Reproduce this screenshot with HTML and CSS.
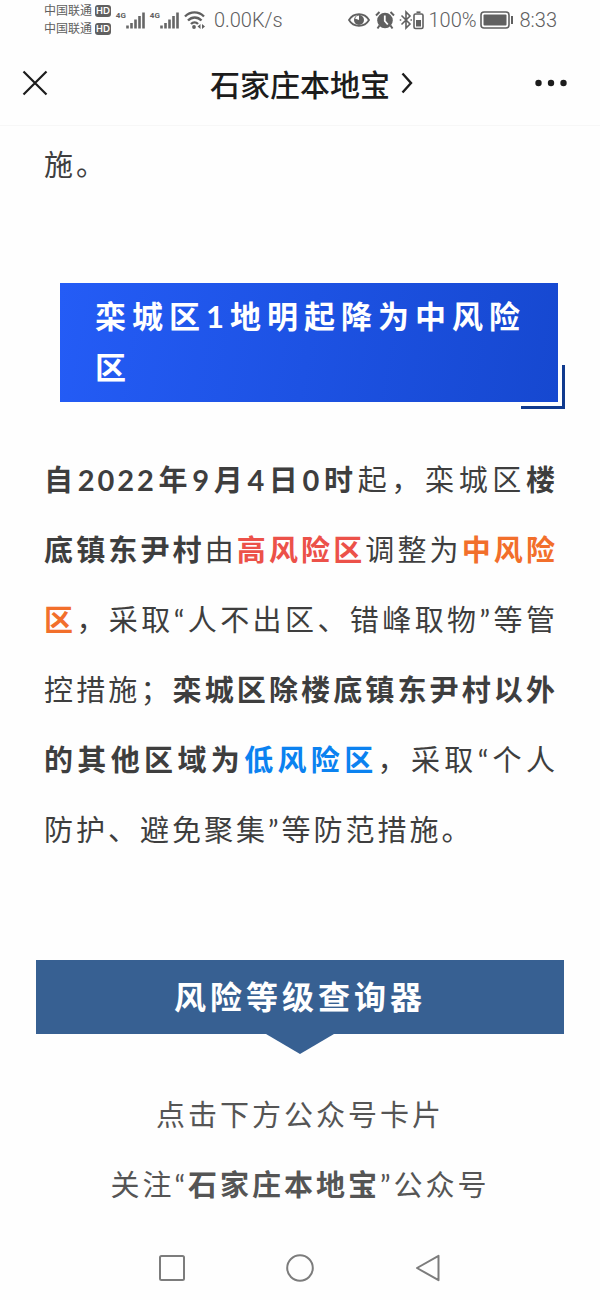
FILE: index.html
```
<!DOCTYPE html>
<html lang="zh-CN">
<head>
  <meta charset="UTF-8">
  <meta name="viewport" content="width=device-width, initial-scale=1.0">
  <title>石家庄本地宝</title>
  <link rel="stylesheet" href="styles.css">
</head>
<body>
  <!-- 状态栏 -->
  <div class="status-bar">
    <div class="status-left">
      <div class="carriers">
        <div class="carrier">中国联通<span class="hd">HD</span></div>
        <div class="carrier">中国联通<span class="hd">HD</span></div>
      </div>
      <div class="signal">
        <span class="net">4G</span>
        <svg width="19" height="18" viewBox="0 0 19 18"><path d="M1.5 14.500v3M5.500 12v5.500M9.500 8.500v9M13.500 5v12.500M17.500 1.500v16" stroke="#666" stroke-width="2.600"/></svg>
      </div>
      <div class="signal">
        <span class="net">4G</span>
        <svg width="19" height="18" viewBox="0 0 19 18"><path d="M1.5 14.500v3M5.500 12v5.500M9.500 8.500v9M13.500 5v12.500M17.500 1.500v16" stroke="#666" stroke-width="2.600"/></svg>
      </div>
      <svg class="wifi" width="22" height="20" viewBox="0 0 22 20" fill="none" stroke="#606060" stroke-width="2.400">
        <path d="M1 6.500C6.500 1 14.500 1 20 6.500M4 10.500c4-4 9.500-4 13.500 0M7 14c2.200-2.200 5-2.200 7 0"/>
        <circle cx="10" cy="17" r="1.900" fill="#606060" stroke="none"/>
        <path d="M16.500 14v5l-3-2.500zM18 14v5l3-2.500z" fill="#606060" stroke="none"/>
      </svg>
      <span class="status-text speed">0.00K/s</span>
    </div>
    <div class="status-right">
      <svg width="22" height="16" viewBox="0 0 22 16">
        <path d="M1 8C5.500.3 16.500.3 21 8 16.500 15.700 5.500 15.700 1 8z" fill="none" stroke="#606060" stroke-width="1.800"/>
        <circle cx="11" cy="8" r="5" fill="#606060"/>
        <path d="M11 8V3.500A4.500 4.500 0 0 0 7 6.500z" fill="#fff"/>
      </svg>
      <svg class="alarm" width="20" height="20" viewBox="0 0 20 20">
        <circle cx="10" cy="10.500" r="7.800" fill="#606060"/>
        <path d="M4.500 15.500l-2 3M15.500 15.500l2 3M1 5.500L4.500 2M19 5.500L15.500 2" stroke="#606060" stroke-width="2"/>
        <path d="M9.800 5.500v5.500l3 3.500" fill="none" stroke="#fff" stroke-width="1.800"/>
      </svg>
      <svg class="bluetooth" width="25" height="20" viewBox="0 0 25 20" fill="none" stroke="#606060">
        <path d="M2.500 5.500l8.500 8.500-4 4V2l4 4-8.500 8.500" stroke-width="1.600"/>
        <path d="M1.500 9.200v1.600M12.200 9.200v1.600" stroke-width="1.500"/>
        <rect x="15" y="4" width="9" height="14.500" rx="1.500" stroke-width="1.600"/>
        <path d="M17.500 2.200h4" stroke-width="1.600"/>
        <rect x="17" y="10" width="5" height="6.500" fill="#606060" stroke="none"/>
      </svg>
      <span class="status-text percent">100%</span>
      <svg class="battery" width="34" height="18" viewBox="0 0 34 18">
        <rect x="1" y="1" width="28" height="16" rx="3" fill="none" stroke="#606060" stroke-width="1.600"/>
        <rect x="3.500" y="3.500" width="23" height="11" rx="1" fill="#606060"/>
        <path d="M32 5v8" stroke="#606060" stroke-width="2"/>
      </svg>
      <span class="status-text">8:33</span>
    </div>
  </div>

  <!-- 顶部导航 -->
  <header class="header">
    <button class="icon-btn" aria-label="关闭">
      <svg width="26" height="26" viewBox="0 0 26 26"><path d="M1.500 1.500l23 23M24.500 1.500l-23 23" stroke="#1c1c1c" stroke-width="2.200"/></svg>
    </button>
    <a class="account" href="#">石家庄本地宝
      <svg width="12" height="22" viewBox="0 0 12 22"><path d="M1.500 1.500L10 11l-8.500 9.500" fill="none" stroke="#1c1c1c" stroke-width="2.400"/></svg>
    </a>
    <button class="icon-btn more" aria-label="更多">
      <svg width="32" height="8" viewBox="0 0 32 8" fill="#1c1c1c"><circle cx="3.500" cy="4" r="3.200"/><circle cx="16" cy="4" r="3.200"/><circle cx="28.500" cy="4" r="3.200"/></svg>
    </button>
  </header>

  <main class="article">
    <p class="text">施。</p>

    <h2 class="section-title">栾城区1地明起降为中风险区</h2>

    <p class="text"><strong>自2022年9月4日0时</strong>起，栾城区<strong>楼底镇东尹村</strong>由<strong class="high">高风险区</strong>调整为<strong class="middle">中风险区</strong>，采取“人不出区、错峰取物”等管控措施；<strong>栾城区除楼底镇东尹村以外的其他区域为<span class="low">低风险区</span></strong>，采取“个人防护、避免聚集”等防范措施。</p>

    <h2 class="banner">风险等级查询器</h2>

    <div class="follow">
      <p>点击下方公众号卡片</p>
      <p>关注“<strong>石家庄本地宝</strong>”公众号</p>
    </div>
  </main>

  <!-- 系统按键 -->
  <nav class="system-nav">
    <button class="icon-btn" aria-label="最近任务">
      <svg width="28" height="28" viewBox="0 0 28 28"><rect x="2" y="2" width="24" height="24" rx="1.500" fill="none" stroke="#7c7c7c" stroke-width="2"/></svg>
    </button>
    <button class="icon-btn" aria-label="主页">
      <svg width="28" height="28" viewBox="0 0 28 28"><circle cx="14" cy="14" r="12.800" fill="none" stroke="#7c7c7c" stroke-width="2"/></svg>
    </button>
    <button class="icon-btn" aria-label="返回">
      <svg width="28" height="28" viewBox="0 0 28 28"><path d="M3 14L24.500 1.800v24.400z" fill="none" stroke="#7c7c7c" stroke-width="2" stroke-linejoin="round"/></svg>
    </button>
  </nav>
</body>
</html>
```
FILE: styles.css
```
* {
  box-sizing: border-box;
}
body {
  margin: 0;
  background-color: #fefefe;
  color: #3e3e3e;
  font-family: Lato, "Noto Sans CJK SC", sans-serif;
}
h2, p {
  margin: 0;
}
svg {
  display: block;
  flex: none;
}
.icon-btn {
  display: flex;
  padding: 0;
  border: none;
  background: none;
  cursor: pointer;
}

/* 状态栏 */
.status-bar {
  display: flex;
  justify-content: space-between;
  align-items: center;
  height: 40px;
  padding: 0 43px 0 44px;
  color: #606060;
}
.status-left,
.status-right {
  display: flex;
  align-items: center;
}
.carrier {
  display: flex;
  align-items: center;
  gap: 3px;
  font-size: 12px;
  line-height: 18px;
}
.hd {
  padding: 0 1px;
  border-radius: 3px;
  background-color: #606060;
  color: #fff;
  font-size: 9px;
  font-weight: bold;
  line-height: 12px;
}
.signal {
  display: flex;
  align-items: flex-start;
  margin-left: 5px;
}
.net {
  font-family: Roboto, sans-serif;
  font-size: 8px;
  font-weight: bold;
  line-height: 9px;
}
.wifi {
  margin-left: 5px;
}
.status-text {
  margin-left: 6px;
  font-family: Roboto, sans-serif;
  font-size: 20px;
  font-weight: 300;
  line-height: 40px;
}
.status-text.speed {
  margin-left: 8px;
}
.alarm {
  margin-left: 5px;
}
.bluetooth {
  margin-left: 4px;
}
.status-text.percent {
  margin-left: 4px;
}
.battery {
  margin-left: 3px;
}

/* 顶部导航 */
.header {
  display: grid;
  grid-template-columns: 1fr auto 1fr;
  align-items: center;
  height: 86px;
  padding: 0 33px 0 22px;
  border-bottom: 1px solid #f7f7f7;
}
.account {
  display: flex;
  align-items: center;
  gap: 11px;
  padding-left: 34px;
  color: #1c1c1c;
  font-size: 30px;
  font-weight: 500;
  text-decoration: none;
}
.more {
  justify-self: end;
}

/* 正文 */
.article {
  padding: 4px 36px 0;
}
.text {
  padding: 0 6px 0 8px;
  font-size: 29px;
  letter-spacing: 3px;
  line-height: 70px;
  text-align: justify;
}
.high {
  color: #ec5149;
}
.middle {
  color: #f26f2b;
}
.low {
  color: #0b82f0;
}
.section-title {
  position: relative;
  margin: 83px 6px 43px 24px;
  padding: 8px 30px 9px 35px;
  background-image: linear-gradient(100deg, #245cf6, #1648d0);
  color: #fff;
  font-size: 31px;
  letter-spacing: 6px;
  line-height: 51px;
}
.section-title::after {
  content: "";
  position: absolute;
  right: -7px;
  bottom: -7px;
  width: 41px;
  height: 41px;
  border-right: 3px solid #103a8e;
  border-bottom: 3px solid #103a8e;
}
.banner {
  position: relative;
  margin-top: 95px;
  background-color: #376092;
  color: #fff;
  font-size: 32px;
  letter-spacing: 4px;
  line-height: 74px;
  text-align: center;
}
.banner::after {
  content: "";
  position: absolute;
  top: 100%;
  left: calc(50% - 34px);
  border: 34px solid transparent;
  border-top: 20px solid #376092;
  border-bottom: 0;
}
.follow {
  margin-top: 46px;
  color: #555;
  font-size: 29px;
  letter-spacing: 3px;
  line-height: 70px;
  text-align: center;
}

/* 系统按键 */
.system-nav {
  display: flex;
  justify-content: center;
  gap: 100px;
  padding: 34px 0 18px;
}
```
